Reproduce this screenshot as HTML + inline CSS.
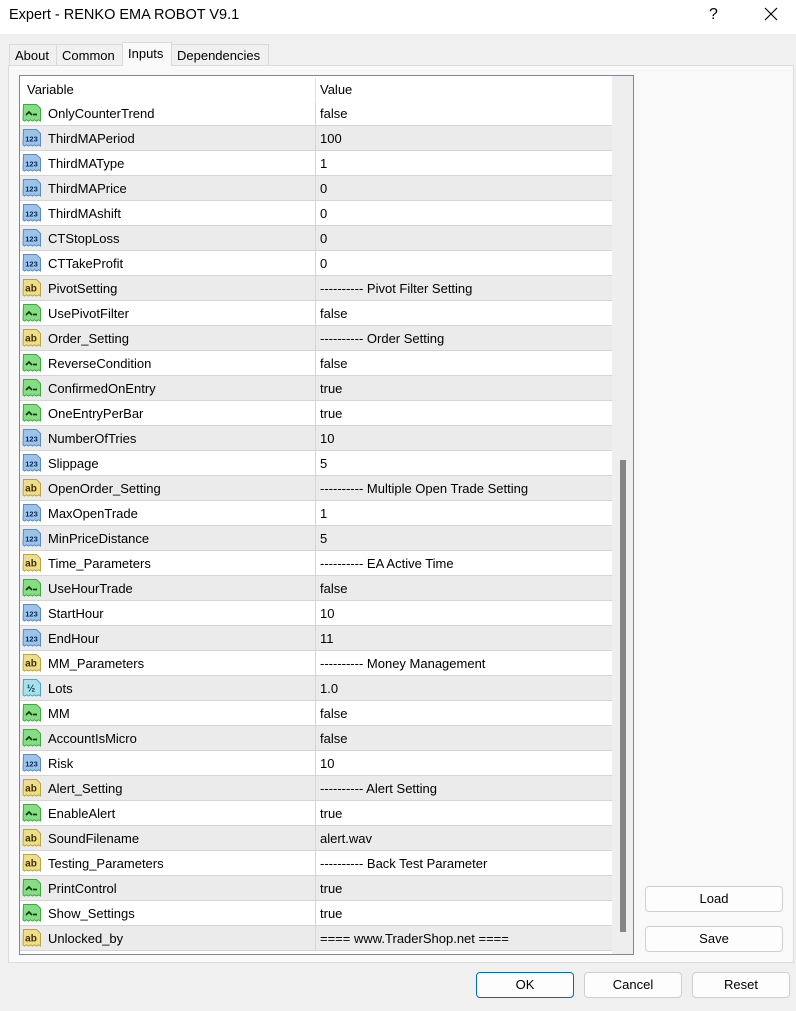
<!DOCTYPE html>
<html><head><meta charset="utf-8"><style>
*{margin:0;padding:0;box-sizing:border-box}
body{width:796px;height:1011px;background:#f0f0f0;font-family:"Liberation Sans",sans-serif;font-size:13px;color:#000;position:relative;overflow:hidden}
.title{position:absolute;left:0;top:0;width:796px;height:34px;background:#fff}
.title span{position:absolute;left:9px;top:7px;font-size:14.5px;color:#000}
.q{position:absolute;left:709px;top:6px;font-size:16px}
.x{position:absolute;left:764px;top:7px}
.tab{position:absolute;top:44px;height:21px;border:1px solid #d9d9d9;border-bottom:none;background:#f0f0f0;padding:3px 5px 0;font-size:13px}
.tab.on{top:42px;height:24px;background:#f9f9f9;z-index:2}
.panel{position:absolute;left:8px;top:65px;width:786px;height:898px;background:#f9f9f9;border:1px solid #dcdcdc}
.tbl{position:absolute;left:19px;top:75px;width:615px;height:880px;border:1px solid #828790;background:#fff;overflow:hidden}
.hdr{position:absolute;left:0;top:0;width:592px;height:25px;background:#fff}
.hdr span{position:absolute;top:6px}
.sb{position:absolute;left:592px;top:0;width:21px;height:880px;background:#eee}
.thumb{position:absolute;left:600px;top:384px;width:6px;height:472px;background:#858585}
.row{position:absolute;left:0;width:592px;height:25px;border-bottom:1px solid #d5d5d5;background:#fff}
.row.g{background:#ebebeb}
.row .n{position:absolute;left:28px;top:5px}
.row .v{position:absolute;left:300px;top:5px}
.row:after{content:"";position:absolute;left:295px;top:0;width:1px;height:25px;background:#d5d5d5}
.row svg{position:absolute;left:2px;top:2px}
.vl{position:absolute;left:295px;top:2px;width:1px;height:22px;background:#e0e0e0}
.btn{position:absolute;height:26px;border:1px solid #d0d0d0;border-radius:4px;background:#fdfdfd;text-align:center;line-height:24px;font-size:13px}
</style></head><body>
<svg width="0" height="0" style="position:absolute"><defs>
<symbol id="b" viewBox="0 0 20 20"><path d="M1.5 1.5h13l4 4v12.5l-2-1.2-2 1.2-2-1.2-2 1.2-2-1.2-2 1.2-2-1.2-2 1.2-1.5-1z" fill="#86dd86" stroke="#3fa83f"/><path d="M4 12l3-3 3 3M11 11.5h4" stroke="#0a3d0a" stroke-width="1.7" fill="none"/></symbol>
<symbol id="i" viewBox="0 0 20 20"><path d="M1.5 1.5h13l4 4v12.5l-2-1.2-2 1.2-2-1.2-2 1.2-2-1.2-2 1.2-2-1.2-2 1.2-1.5-1z" fill="#9cc4ea" stroke="#5b8bbf"/><text x="9.5" y="13.5" font-size="7.5" font-weight="bold" text-anchor="middle" fill="#0a2a55" font-family="Liberation Sans">123</text></symbol>
<symbol id="s" viewBox="0 0 20 20"><path d="M1.5 1.5h13l4 4v12.5l-2-1.2-2 1.2-2-1.2-2 1.2-2-1.2-2 1.2-2-1.2-2 1.2-1.5-1z" fill="#eedd8a" stroke="#b9a540"/><text x="9" y="13.5" font-size="10" font-weight="bold" text-anchor="middle" fill="#3d3000" font-family="Liberation Sans">ab</text></symbol>
<symbol id="d" viewBox="0 0 20 20"><path d="M1.5 1.5h13l4 4v12.5l-2-1.2-2 1.2-2-1.2-2 1.2-2-1.2-2 1.2-2-1.2-2 1.2-1.5-1z" fill="#a8e0ee" stroke="#4aa6c0"/><text x="9" y="13.5" font-size="10" font-weight="bold" text-anchor="middle" fill="#0a3a4a" font-family="Liberation Sans">½</text></symbol>
</defs></svg>
<div class="title"><span>Expert - RENKO EMA ROBOT V9.1</span><div class="q">?</div><svg class="x" width="14" height="14"><path d="M1 1L13 13M13 1L1 13" stroke="#000" stroke-width="1.2"/></svg></div>
<div class="panel"></div>
<div class="tab" style="left:9px;width:48px">About</div>
<div class="tab" style="left:56px;width:67px">Common</div>
<div class="tab on" style="left:122px;width:50px">Inputs</div>
<div class="tab" style="left:171px;width:98px">Dependencies</div>
<div class="tbl">
<div class="hdr"><span style="left:7px">Variable</span><span style="left:300px">Value</span><div class="vl"></div></div>
<div class="row" style="top:25px"><svg width="20" height="20"><use href="#b" width="20" height="20"/></svg><span class="n">OnlyCounterTrend</span><span class="v">false</span></div>
<div class="row g" style="top:50px"><svg width="20" height="20"><use href="#i" width="20" height="20"/></svg><span class="n">ThirdMAPeriod</span><span class="v">100</span></div>
<div class="row" style="top:75px"><svg width="20" height="20"><use href="#i" width="20" height="20"/></svg><span class="n">ThirdMAType</span><span class="v">1</span></div>
<div class="row g" style="top:100px"><svg width="20" height="20"><use href="#i" width="20" height="20"/></svg><span class="n">ThirdMAPrice</span><span class="v">0</span></div>
<div class="row" style="top:125px"><svg width="20" height="20"><use href="#i" width="20" height="20"/></svg><span class="n">ThirdMAshift</span><span class="v">0</span></div>
<div class="row g" style="top:150px"><svg width="20" height="20"><use href="#i" width="20" height="20"/></svg><span class="n">CTStopLoss</span><span class="v">0</span></div>
<div class="row" style="top:175px"><svg width="20" height="20"><use href="#i" width="20" height="20"/></svg><span class="n">CTTakeProfit</span><span class="v">0</span></div>
<div class="row g" style="top:200px"><svg width="20" height="20"><use href="#s" width="20" height="20"/></svg><span class="n">PivotSetting</span><span class="v">---------- Pivot Filter Setting</span></div>
<div class="row" style="top:225px"><svg width="20" height="20"><use href="#b" width="20" height="20"/></svg><span class="n">UsePivotFilter</span><span class="v">false</span></div>
<div class="row g" style="top:250px"><svg width="20" height="20"><use href="#s" width="20" height="20"/></svg><span class="n">Order_Setting</span><span class="v">---------- Order Setting</span></div>
<div class="row" style="top:275px"><svg width="20" height="20"><use href="#b" width="20" height="20"/></svg><span class="n">ReverseCondition</span><span class="v">false</span></div>
<div class="row g" style="top:300px"><svg width="20" height="20"><use href="#b" width="20" height="20"/></svg><span class="n">ConfirmedOnEntry</span><span class="v">true</span></div>
<div class="row" style="top:325px"><svg width="20" height="20"><use href="#b" width="20" height="20"/></svg><span class="n">OneEntryPerBar</span><span class="v">true</span></div>
<div class="row g" style="top:350px"><svg width="20" height="20"><use href="#i" width="20" height="20"/></svg><span class="n">NumberOfTries</span><span class="v">10</span></div>
<div class="row" style="top:375px"><svg width="20" height="20"><use href="#i" width="20" height="20"/></svg><span class="n">Slippage</span><span class="v">5</span></div>
<div class="row g" style="top:400px"><svg width="20" height="20"><use href="#s" width="20" height="20"/></svg><span class="n">OpenOrder_Setting</span><span class="v">---------- Multiple Open Trade Setting</span></div>
<div class="row" style="top:425px"><svg width="20" height="20"><use href="#i" width="20" height="20"/></svg><span class="n">MaxOpenTrade</span><span class="v">1</span></div>
<div class="row g" style="top:450px"><svg width="20" height="20"><use href="#i" width="20" height="20"/></svg><span class="n">MinPriceDistance</span><span class="v">5</span></div>
<div class="row" style="top:475px"><svg width="20" height="20"><use href="#s" width="20" height="20"/></svg><span class="n">Time_Parameters</span><span class="v">---------- EA Active Time</span></div>
<div class="row g" style="top:500px"><svg width="20" height="20"><use href="#b" width="20" height="20"/></svg><span class="n">UseHourTrade</span><span class="v">false</span></div>
<div class="row" style="top:525px"><svg width="20" height="20"><use href="#i" width="20" height="20"/></svg><span class="n">StartHour</span><span class="v">10</span></div>
<div class="row g" style="top:550px"><svg width="20" height="20"><use href="#i" width="20" height="20"/></svg><span class="n">EndHour</span><span class="v">11</span></div>
<div class="row" style="top:575px"><svg width="20" height="20"><use href="#s" width="20" height="20"/></svg><span class="n">MM_Parameters</span><span class="v">---------- Money Management</span></div>
<div class="row g" style="top:600px"><svg width="20" height="20"><use href="#d" width="20" height="20"/></svg><span class="n">Lots</span><span class="v">1.0</span></div>
<div class="row" style="top:625px"><svg width="20" height="20"><use href="#b" width="20" height="20"/></svg><span class="n">MM</span><span class="v">false</span></div>
<div class="row g" style="top:650px"><svg width="20" height="20"><use href="#b" width="20" height="20"/></svg><span class="n">AccountIsMicro</span><span class="v">false</span></div>
<div class="row" style="top:675px"><svg width="20" height="20"><use href="#i" width="20" height="20"/></svg><span class="n">Risk</span><span class="v">10</span></div>
<div class="row g" style="top:700px"><svg width="20" height="20"><use href="#s" width="20" height="20"/></svg><span class="n">Alert_Setting</span><span class="v">---------- Alert Setting</span></div>
<div class="row" style="top:725px"><svg width="20" height="20"><use href="#b" width="20" height="20"/></svg><span class="n">EnableAlert</span><span class="v">true</span></div>
<div class="row g" style="top:750px"><svg width="20" height="20"><use href="#s" width="20" height="20"/></svg><span class="n">SoundFilename</span><span class="v">alert.wav</span></div>
<div class="row" style="top:775px"><svg width="20" height="20"><use href="#s" width="20" height="20"/></svg><span class="n">Testing_Parameters</span><span class="v">---------- Back Test Parameter</span></div>
<div class="row g" style="top:800px"><svg width="20" height="20"><use href="#b" width="20" height="20"/></svg><span class="n">PrintControl</span><span class="v">true</span></div>
<div class="row" style="top:825px"><svg width="20" height="20"><use href="#b" width="20" height="20"/></svg><span class="n">Show_Settings</span><span class="v">true</span></div>
<div class="row g" style="top:850px"><svg width="20" height="20"><use href="#s" width="20" height="20"/></svg><span class="n">Unlocked_by</span><span class="v">==== www.TraderShop.net ====</span></div>
<div class="sb"></div><div class="thumb"></div>
</div>
<div class="btn" style="left:645px;top:886px;width:138px">Load</div>
<div class="btn" style="left:645px;top:926px;width:138px">Save</div>
<div class="btn" style="left:476px;top:972px;width:98px;border-color:#0067c0">OK</div>
<div class="btn" style="left:584px;top:972px;width:98px">Cancel</div>
<div class="btn" style="left:692px;top:972px;width:98px">Reset</div>
</body></html>
